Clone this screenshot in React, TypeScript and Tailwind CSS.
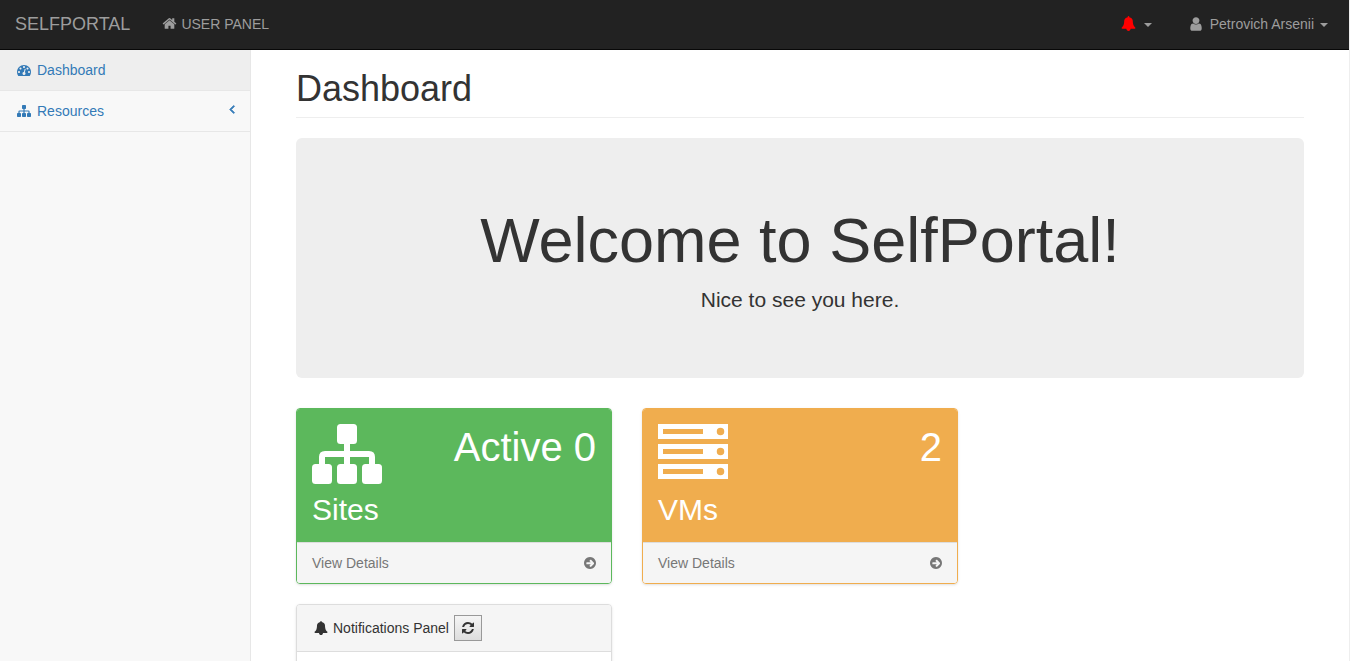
import type { ReactNode } from "react";

const ICONS = {
  bell: "M1728 1408q0 52-38 90t-90 38h-448q0 106-75 181t-181 75-181-75-75-181h-448q-52 0-90-38t-38-90q50-42 91-88t85-119.5 74.5-158.5 50-206 19.5-260q0-152 117-282.5t307-158.5q-8-19-8-39 0-40 28-68t68-28 68 28 28 68q0 20-8 39 190 28 307 158.5t117 282.5q0 139 19.5 260t50 206 74.5 158.5 85 119.5 91 88z",
  home: "M1472 992v480q0 26-19 45t-45 19h-384v-384h-256v384h-384q-26 0-45-19t-19-45v-480q0-1 .5-3t.5-3l575-474 575 474q1 2 1 6zm223-69l-62 74q-8 9-21 11h-3q-13 0-21-7l-692-577-692 577q-12 8-24 7-13-2-21-11l-62-74q-8-10-7-23.5t11-21.5l719-599q32-26 76-26t76 26l244 204v-195q0-14 9-23t23-9h192q14 0 23 9t9 23v408l219 182q10 8 11 21.5t-7 23.5z",
  user: "M1536 1399q0 109-62.5 187t-150.5 78h-854q-88 0-150.5-78t-62.5-187q0-85 8.5-160.5t31.5-152 58.5-131 94-89 134.5-34.5q131 128 313 128t313-128q76 0 134.5 34.5t94 89 58.5 131 31.5 152 8.5 160.5zm-256-887q0 159-112.5 271.5t-271.5 112.5-271.5-112.5-112.5-271.5 112.5-271.5 271.5-112.5 271.5 112.5 112.5 271.5z",
  gauge:
    "M384 1152q0-53-37.5-90.5t-90.5-37.5-90.5 37.5-37.5 90.5 37.5 90.5 90.5 37.5 90.5-37.5 37.5-90.5zm192-448q0-53-37.5-90.5t-90.5-37.5-90.5 37.5-37.5 90.5 37.5 90.5 90.5 37.5 90.5-37.5 37.5-90.5zm428 481l101-382q6-26-7.5-48.5t-38.5-29.5-48 6.5-30 39.5l-101 382q-60 5-107 43.5t-63 98.5q-20 77 20 146t117 89 146-20 89-117q16-60-6-117t-72-91zm660-33q0-53-37.5-90.5t-90.5-37.5-90.5 37.5-37.5 90.5 37.5 90.5 90.5 37.5 90.5-37.5 37.5-90.5zm-640-640q0-53-37.5-90.5t-90.5-37.5-90.5 37.5-37.5 90.5 37.5 90.5 90.5 37.5 90.5-37.5 37.5-90.5zm448 192q0-53-37.5-90.5t-90.5-37.5-90.5 37.5-37.5 90.5 37.5 90.5 90.5 37.5 90.5-37.5 37.5-90.5zm320 448q0 261-141 483-19 29-54 29h-1402q-35 0-54-29-141-221-141-483 0-182 71-348t191-286 286-191 348-71 348 71 286 191 191 286 71 348z",
  refresh:
    "M1639 1056q0 5-1 7-64 268-268 434.5t-478 166.5q-146 0-282.5-55t-243.5-157l-129 129q-19 19-45 19t-45-19-19-45v-448q0-26 19-45t45-19h448q26 0 45 19t19 45-19 45l-137 137q71 66 161 102t187 36q134 0 250-65t186-179q11-17 53-117 8-23 30-23h192q13 0 22.5 9.5t9.5 22.5zm25-800v448q0 26-19 45t-45 19h-448q-26 0-45-19t-19-45 19-45l138-138q-148-137-349-137-134 0-250 65t-186 179q-11 17-53 117-8 23-30 23h-199q-13 0-22.5-9.5t-9.5-22.5v-7q65-268 270-434.5t480-166.5q146 0 284 55.5t245 156.5l130-129q19-19 45-19t45 19 19 45z",
  arrow:
    "M1413 896q0-27-18-45l-362-362q-18-18-45-18t-45 18l-91 91q-18 18-18 45t18 45l142 142h-502q-26 0-45 19t-19 45v128q0 26 19 45t45 19h502l-142 142q-19 19-19 45t19 45l91 91q18 18 45 18t45-18l362-362q18-18 18-45zm251 0q0 209-103 385.5t-279.5 279.5-385.5 103-385.5-103-279.5-279.5-103-385.5 103-385.5 279.5-279.5 385.5-103 385.5 103 279.5 279.5 103 385.5z",
  angleLeft:
    "M1203 544q0 13-10 23l-393 393 393 393q10 10 10 23t-10 23l-50 50q-10 10-23 10t-23-10l-466-466q-10-10-10-23t10-23l466-466q10-10 23-10t23 10l50 50q10 10 10 23z",
};

function Icon({ name, className = "size-[14px]" }: { name: keyof typeof ICONS; className?: string }) {
  return (
    <svg viewBox="0 0 1792 1792" fill="currentColor" fillRule="evenodd" aria-hidden="true" className={`shrink-0 ${className}`}>
      <path d={ICONS[name]} />
    </svg>
  );
}

function Sitemap({ className }: { className: string }) {
  return (
    <svg viewBox="0 0 70 70" fill="currentColor" aria-hidden="true" className={`shrink-0 ${className}`}>
      <rect x="25" y="5" width="20" height="20" rx="3.500" />
      <rect x="0" y="45" width="20" height="20" rx="3.500" />
      <rect x="25" y="45" width="20" height="20" rx="3.500" />
      <rect x="50" y="45" width="20" height="20" rx="3.500" />
      <path d="M10 47V38q0-3 3-3H57q3 0 3 3V47M35 23V47" fill="none" stroke="currentColor" strokeWidth="6" />
    </svg>
  );
}

function Caret() {
  return (
    <svg viewBox="0 0 8 4" fill="currentColor" aria-hidden="true" className="mt-[3px] h-[4px] w-[8px] shrink-0">
      <path d="M0 0h8L4 4z" />
    </svg>
  );
}

function ServerStack() {
  return (
    <svg viewBox="0 0 70 70" fill="currentColor" fillRule="evenodd" aria-hidden="true" className="size-[70px]">
      {[5, 25, 45].map((y) => (
        <path
          key={y}
          transform={`translate(0 ${y})`}
          d="M0 0h70v15H0zM5 5v5h40V5zM62.500 3.750a3.750 3.750 0 1 0 0 7.500a3.750 3.750 0 1 0 0-7.500z"
        />
      ))}
    </svg>
  );
}

type StatCardProps = { icon: ReactNode; value: string; label: string; border: string; fill: string };

function StatCard({ icon, value, label, border, fill }: StatCardProps) {
  return (
    <section className={`overflow-hidden rounded-[4px] border shadow-sm ${border}`}>
      <div className={`px-[15px] pt-[10px] pb-[15px] text-white ${fill}`}>
        <div className="flex items-start justify-between">
          {icon}
          <div className="text-[40px] leading-[56px]">{value}</div>
        </div>
        <h2 className="pt-[3px] text-[30px] leading-[35px]">{label}</h2>
      </div>
      <a
        href="#details"
        className="flex items-center justify-between border-t border-[#ddd] bg-[#f5f5f5] py-[10px] pr-[14px] pl-[15px] text-[#777]"
      >
        View Details
        <Icon name="arrow" />
      </a>
    </section>
  );
}

export default function App() {
  return (
    <div className="flex h-screen flex-col border-r border-[#eee] bg-white font-['Liberation_Sans',Arial,sans-serif] text-[14px] leading-[20px] text-[#333]">
      <header className="flex h-[50px] shrink-0 items-center justify-between border-b border-[#080808] bg-[#222] pb-[2px] text-[#9d9d9d]">
        <nav className="flex items-center">
          <a href="#home" className="px-[15px] text-[18px]">
            SELFPORTAL
          </a>
          <a href="#user" className="flex items-center gap-[4px] px-[17px]">
            <Icon name="home" className="size-[15px]" />
            USER PANEL
          </a>
        </nav>
        <div className="flex items-center">
          <button type="button" aria-label="Notifications" className="flex items-center gap-[8px] px-[18px]">
            <Icon name="bell" className="size-[15px] text-[red]" />
            <Caret />
          </button>
          <button type="button" className="flex items-center gap-[6px] pr-[21px] pl-[18px]">
            <Icon name="user" className="size-[16px]" />
            Petrovich Arsenii
            <Caret />
          </button>
        </div>
      </header>
      <div className="flex min-h-0 flex-1">
        <aside className="w-[251px] shrink-0 border-r border-[#e7e7e7] bg-[#f8f8f8]">
          <nav className="text-[#337ab7]">
            <a href="#dashboard" className="flex items-center gap-[6px] border-b border-[#e7e7e7] bg-[#eee] px-[17px] py-[10px]">
              <Icon name="gauge" />
              Dashboard
            </a>
            <a href="#resources" className="flex items-center gap-[6px] border-b border-[#e7e7e7] px-[17px] py-[10px]">
              <Sitemap className="size-[14px]" />
              <span className="flex-1">Resources</span>
              <Icon name="angleLeft" className="mb-[4px] -mr-[6px] size-[14px] stroke-current stroke-[120]" />
            </a>
          </nav>
        </aside>
        <main className="min-w-0 flex-1 overflow-y-auto px-[45px] [scrollbar-width:none]">
          <h1 className="mt-[19px] mb-[20px] border-b border-[#eee] pb-[9px] text-[36px] leading-[39px]">Dashboard</h1>
          <section className="mb-[30px] rounded-[6px] bg-[#eee] px-[60px] pt-[68px] pb-[63px] text-center">
            <h2 className="text-[63px] leading-[69px]">Welcome to SelfPortal!</h2>
            <p className="mt-[10px] text-[21px] leading-[30px]">Nice to see you here.</p>
          </section>
          <div className="grid grid-cols-3 gap-x-[30px] gap-y-[20px]">
            <StatCard
              icon={<Sitemap className="size-[70px]" />}
              value="Active 0"
              label="Sites"
              border="border-[#5cb85c]"
              fill="bg-[#5cb85c]"
            />
            <StatCard icon={<ServerStack />} value="2" label="VMs" border="border-[#f0ad4e]" fill="bg-[#f0ad4e]" />
            <section className="col-start-1 rounded-[4px] border border-[#ddd] bg-white shadow-sm">
              <div className="flex items-center gap-[5px] rounded-t-[3px] border-b border-[#ddd] bg-[#f5f5f5] px-[17px] py-[10px]">
                <Icon name="bell" />
                <h2>Notifications Panel</h2>
                <button
                  type="button"
                  aria-label="Refresh notifications"
                  className="flex h-[26px] w-[28px] items-center justify-center border border-[#999] bg-linear-to-b from-[#f5f5f5] to-[#ddd]"
                >
                  <Icon name="refresh" />
                </button>
              </div>
              <div className="h-[120px]" />
            </section>
          </div>
        </main>
      </div>
    </div>
  );
}
